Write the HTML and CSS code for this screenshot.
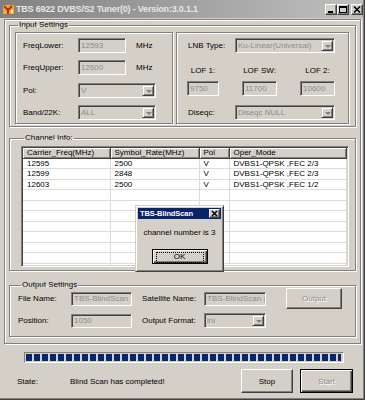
FILE: index.html
```html
<!DOCTYPE html>
<html lang="en">
<head>
  <meta charset="UTF-8" />
  <title>TBS 6922 DVBS/S2 Tuner(0)</title>
  <link rel="stylesheet" href="styles.css">
</head>
<body>

<div class="window">
  <div class="titlebar">
    <svg class="app-icon" width="11" height="11" viewBox="0 0 11 11">
      <rect x="0" y="1" width="11" height="9" fill="#f3a640"/>
      <path d="M1 2 L5 6 L9 2" stroke="#b0301a" stroke-width="2" fill="none"/>
      <rect x="4" y="6" width="2" height="4" fill="#b0301a"/>
      <rect x="8" y="6" width="2" height="3" fill="#fff2c0"/>
    </svg>
    <span class="title">TBS 6922 DVBS/S2 Tuner(0) - Version:3.0.1.1</span>
    <div class="caption-btns">
      <span class="cap-btn">
        <svg width="10" height="9" viewBox="0 0 10 9"><rect x="2" y="6" width="5" height="2" fill="#000"/></svg>
      </span>
      <span class="cap-btn">
        <svg width="10" height="9" viewBox="0 0 10 9"><rect x="1.5" y="1.5" width="7" height="6" fill="none" stroke="#000"/><rect x="1" y="1" width="8" height="2" fill="#000"/></svg>
      </span>
      <span class="cap-btn close">
        <svg width="10" height="9" viewBox="0 0 10 9"><path d="M2 1.5 L8 7.5 M8 1.5 L2 7.5" stroke="#000" stroke-width="1.6"/></svg>
      </span>
    </div>
  </div>

  <div class="frame">
    <fieldset class="group input-group">
      <legend>Input Settings</legend>
      <div class="panels">
        <div class="panel panel-left">
          <div class="row">
            <label>FreqLower:</label>
            <div class="edit w-freq">12593</div>
            <span class="unit">MHz</span>
          </div>
          <div class="row">
            <label>FreqUpper:</label>
            <div class="edit w-freq">12600</div>
            <span class="unit">MHz</span>
          </div>
          <div class="row">
            <label>Pol:</label>
            <div class="combo w-pol"><span class="val">V</span><span class="drop"></span></div>
          </div>
          <div class="row">
            <label>Band/22K:</label>
            <div class="combo w-pol"><span class="val">ALL</span><span class="drop"></span></div>
          </div>
        </div>

        <div class="panel panel-right">
          <div class="row">
            <label class="lbl-r">LNB Type:</label>
            <div class="combo w-lnb"><span class="val">Ku-Linear(Universal)</span><span class="drop"></span></div>
          </div>
          <div class="lof-grid">
            <span>LOF 1:</span>
            <span>LOF SW:</span>
            <span>LOF 2:</span>
            <div class="edit">9750</div>
            <div class="edit">11700</div>
            <div class="edit">10600</div>
          </div>
          <div class="row row-diseqc">
            <label class="lbl-r">Diseqc:</label>
            <div class="combo w-lnb"><span class="val">Diseqc NULL</span><span class="drop"></span></div>
          </div>
        </div>
      </div>
    </fieldset>

    <fieldset class="group channel-group">
      <legend>Channel Info:</legend>
      <div class="list">
        <table>
          <colgroup>
            <col class="c-freq"><col class="c-sr"><col class="c-pol"><col>
          </colgroup>
          <thead>
            <tr>
              <th>Carrier_Freq(MHz)</th>
              <th>Symbol_Rate(MHz)</th>
              <th>Pol</th>
              <th>Oper_Mode</th>
            </tr>
          </thead>
          <tbody>
            <tr><td>12595</td><td>2500</td><td>V</td><td>DVBS1-QPSK ,FEC 2/3</td></tr>
            <tr><td>12599</td><td>2848</td><td>V</td><td>DVBS1-QPSK ,FEC 2/3</td></tr>
            <tr><td>12603</td><td>2500</td><td>V</td><td>DVBS1-QPSK ,FEC 1/2</td></tr>
            <tr><td></td><td></td><td></td><td></td></tr>
            <tr><td></td><td></td><td></td><td></td></tr>
            <tr><td></td><td></td><td></td><td></td></tr>
            <tr><td></td><td></td><td></td><td></td></tr>
            <tr><td></td><td></td><td></td><td></td></tr>
            <tr><td></td><td></td><td></td><td></td></tr>
            <tr><td></td><td></td><td></td><td></td></tr>
            <tr><td></td><td></td><td></td><td></td></tr>
            <tr><td></td><td></td><td></td><td></td></tr>
          </tbody>
        </table>
      </div>
    </fieldset>

    <fieldset class="group output-group">
      <legend>Output Settings</legend>
      <div class="out-grid">
        <label>File Name:</label>
        <div class="edit">TBS-BlindScan</div>
        <label>Satellite Name:</label>
        <div class="edit">TBS-BlindScan (</div>
        <button class="btn out-btn" disabled>Output</button>

        <label>Position:</label>
        <div class="edit">1050</div>
        <label>Output Format:</label>
        <div class="combo"><span class="val">ini</span><span class="drop"></span></div>
      </div>
    </fieldset>
  </div>

  <div class="progress"><div class="progress-fill"></div></div>

  <div class="status-row">
    <span class="state-lbl">State:</span>
    <span class="state-msg">Blind Scan has completed!</span>
    <button class="btn stop-btn">Stop</button>
    <button class="btn start-btn" disabled>Start</button>
  </div>

  <div class="msgbox">
    <div class="msgbox-title">
      <span>TBS-BlindScan</span>
      <span class="cap-btn msg-close">
        <svg width="9" height="7" viewBox="0 0 9 7"><path d="M2 1 L7 6 M7 1 L2 6" stroke="#000" stroke-width="1.5"/></svg>
      </span>
    </div>
    <p class="msgbox-text">channel number is 3</p>
    <button class="btn ok-btn"><span>OK</span></button>
  </div>
</div>

</body>
</html>
```

FILE: styles.css
```css
* {
  box-sizing: border-box;
}

body {
  margin: 0;
  background: #d4d0c8;
  font-family: "Liberation Sans", Arial, sans-serif;
  font-size: 8px;
  color: #000;
}

.window {
  position: relative;
  width: 365px;
  height: 400px;
  overflow: hidden;
  background: #d4d0c8;
  box-shadow: inset -1px -1px #404040, inset -2px -2px #808080;
}

/* title bar (inactive) */
.titlebar {
  display: flex;
  align-items: center;
  height: 18px;
  margin-right: 2px;
  padding-left: 3px;
  background: linear-gradient(to right, #808080, #c0c0c0);
}

.app-icon {
  flex: none;
}

.title {
  margin-left: 2px;
  color: #e6e6e6;
  font-weight: bold;
  font-size: 9px;
  letter-spacing: -0.2px;
  white-space: nowrap;
}

.caption-btns {
  display: flex;
  margin-left: auto;
}

.cap-btn {
  display: flex;
  align-items: center;
  justify-content: center;
  width: 12px;
  height: 11px;
  background: #d4d0c8;
  border: 1px solid;
  border-color: #fff #404040 #404040 #fff;
  box-shadow: inset -1px -1px #808080;
}

.cap-btn.close {
  margin-left: 2px;
}

/* etched frames */
.frame {
  margin: 1px 4px 0 4px;
  padding: 0 4px 6px 4px;
  border: 1px solid #808080;
  box-shadow: inset 1px 1px #fff, 1px 1px #fff;
}

.group {
  margin: 0;
  min-width: 0;
  border: 1px solid #808080;
  box-shadow: inset 1px 1px #fff, 1px 1px #fff;
}

.group legend {
  margin-left: 3px;
  padding: 0 1px;
  line-height: 10px;
}

.input-group {
  padding: 2px 6px 2px 5px;
}

.panels {
  display: flex;
  gap: 3px;
}

.panel {
  height: 92px;
  padding-top: 5px;
  border: 1px solid #808080;
  box-shadow: inset 1px 1px #fff, 1px 1px #fff;
}

.panel-left {
  width: 158px;
  padding-left: 7px;
  display: flex;
  flex-direction: column;
  gap: 7.3px;
}

.panel-right {
  flex: 1;
}

.row {
  display: flex;
  align-items: center;
  height: 15px;
}

.row label {
  width: 55px;
}

.row .lbl-r {
  width: 47px;
  margin-left: 11px;
}

.unit {
  margin-left: 10px;
}

/* sunken edit and combo boxes (disabled) */
.edit,
.combo {
  display: flex;
  align-items: center;
  height: 15px;
  padding-left: 2px;
  background: #d4d0c8;
  color: #8c8c8c;
  white-space: nowrap;
  overflow: hidden;
  border: 1px solid;
  border-color: #808080 #fff #fff #808080;
  box-shadow: inset 1px 1px #404040, inset -1px -1px #d4d0c8;
}

.combo .val {
  flex: 1;
  overflow: hidden;
}

.drop {
  position: relative;
  flex: none;
  width: 12px;
  height: 11px;
  margin-right: 1px;
  background: #d4d0c8;
  border: 1px solid;
  border-color: #d4d0c8 #404040 #404040 #d4d0c8;
  box-shadow: inset 1px 1px #fff, inset -1px -1px #808080;
}

.drop::after {
  content: "";
  position: absolute;
  left: 3px;
  top: 4px;
  border-left: 3px solid transparent;
  border-right: 3px solid transparent;
  border-top: 3px solid #808080;
}

.w-freq {
  width: 48px;
}

.w-pol {
  width: 78px;
}

.w-lnb {
  width: 100px;
}

.lof-grid {
  display: grid;
  grid-template-columns: 32px 35px 35px;
  grid-template-rows: 10px 15px;
  column-gap: 23px;
  row-gap: 5px;
  margin: 13px 0 0 10px;
}

.lof-grid span {
  line-height: 10px;
  text-align: center;
}

.row-diseqc {
  margin-top: 9px;
}

/* channel list */
.channel-group {
  margin-top: 6px;
  padding: 3px 6px 3px 11px;
}

.list {
  height: 121px;
  overflow: hidden;
  background: #fff;
  border: 1px solid;
  border-color: #808080 #fff #fff #808080;
  box-shadow: inset 1px 1px #404040, inset -1px -1px #d4d0c8;
  padding: 1px;
}

.list table {
  width: 100%;
  table-layout: fixed;
  border-collapse: collapse;
}

.c-freq {
  width: 87px;
}

.c-sr {
  width: 89px;
}

.c-pol {
  width: 30px;
}

.list th {
  height: 10px;
  padding: 0 0 0 4px;
  font-weight: normal;
  text-align: left;
  line-height: 8px;
  background: #d4d0c8;
  border-right: 1px solid #404040;
  border-bottom: 1px solid #404040;
  box-shadow: inset 1px 1px #fff, inset -1px -1px #808080;
  white-space: nowrap;
  overflow: hidden;
}

.list td {
  height: 10.5px;
  padding: 0 0 0 4px;
  line-height: 9px;
  border-right: 1px solid #dcdcdc;
  border-bottom: 1px solid #dcdcdc;
  white-space: nowrap;
}

/* output settings */
.output-group {
  margin-top: 9px;
  padding: 0 4px 8px 8px;
}

.out-grid {
  display: grid;
  grid-template-columns: 53px 61px 72px 62px 56px;
  grid-template-rows: 21px 15px;
  row-gap: 4px;
  align-items: center;
  margin-top: -2px;
}

.out-grid label {
  white-space: nowrap;
}

.out-grid .edit {
  height: 14px;
}

.out-grid > :nth-child(3),
.out-grid > :nth-child(8) {
  margin-left: 10px;
}

.out-btn {
  margin-left: 20px;
  height: 21px;
  width: 56px;
}

/* buttons */
.btn {
  font-family: inherit;
  font-size: 8px;
  color: #000;
  padding: 0;
  background: #d4d0c8;
  border: 1px solid;
  border-color: #fff #404040 #404040 #fff;
  box-shadow: inset -1px -1px #808080;
}

.btn:disabled {
  color: #8c8c8c;
  text-shadow: 1px 1px #fff;
}

/* progress */
.progress {
  width: 320px;
  height: 11px;
  margin: 8px 0 0 24px;
  padding: 1px 2px 1px 1px;
  border: 1px solid;
  border-color: #808080 #fff #fff #808080;
}

.progress-fill {
  height: 100%;
  background: repeating-linear-gradient(to right, #0a246a 0 6px, transparent 6px 8px);
}

.status-row {
  display: flex;
  align-items: center;
  height: 24px;
  margin-top: 6px;
}

.state-lbl {
  width: 53px;
  margin-left: 17px;
}

.stop-btn {
  margin-left: auto;
  width: 52px;
  height: 24px;
}

.start-btn {
  width: 53px;
  height: 24px;
  margin: 0 12px 0 7px;
  border: 1px solid #000;
  box-shadow: inset 1px 1px #fff, inset -1px -1px #404040, inset -2px -2px #808080;
}

/* message box */
.msgbox {
  position: absolute;
  left: 135px;
  top: 205px;
  width: 89px;
  height: 67px;
  padding: 2px;
  background: #d4d0c8;
  border: 1px solid;
  border-color: #d4d0c8 #404040 #404040 #d4d0c8;
  box-shadow: inset 1px 1px #fff, inset -1px -1px #808080;
  text-align: center;
}

.msgbox-title {
  display: flex;
  align-items: center;
  height: 11px;
  padding: 0 1px 0 2px;
  background: #0a246a;
  color: #fff;
  font-weight: bold;
  font-size: 7.5px;
  letter-spacing: -0.1px;
}

.msg-close {
  margin-left: auto;
  width: 11px;
  height: 9px;
}

.msgbox-text {
  margin: 9px 0 0 0;
  line-height: 10px;
}

.ok-btn {
  width: 56px;
  height: 15px;
  margin-top: 11px;
  padding: 1px;
  border: 1px solid #000;
  box-shadow: inset 1px 1px #fff, inset -1px -1px #404040, inset -2px -2px #808080;
}

.ok-btn span {
  display: block;
  height: 100%;
  margin: 1px 2px;
  line-height: 9px;
  outline: 1px dotted #000;
  outline-offset: -1px;
}
```
